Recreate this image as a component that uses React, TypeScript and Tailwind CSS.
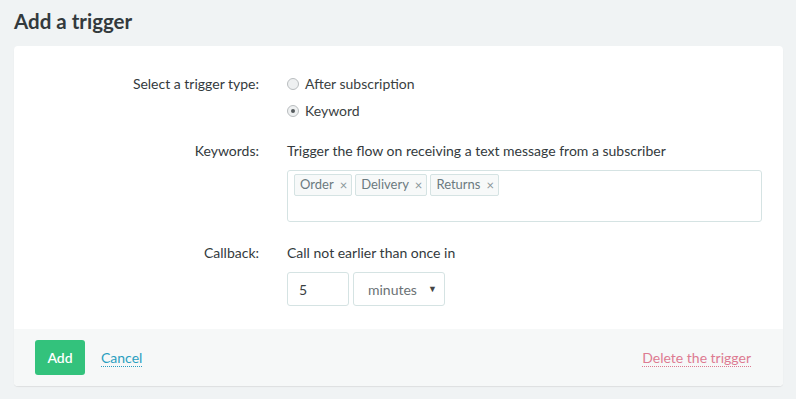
import React from "react";

function Tag({ label }: { label: string }) {
  return (
    <span className="flex h-[22px] items-center gap-[6px] rounded-[2px] border border-[#d5e3e3] bg-[#f7f9f9] pl-[5px] pr-[4px] text-[13px] text-[#6b7a80]">
      <span>{label}</span>
      <span className="text-[13px] leading-none text-[#8a9599]">×</span>
    </span>
  );
}

function Radio({ checked, label }: { checked?: boolean; label: string }) {
  return (
    <label className="flex h-[27px] items-center gap-[6px] text-[14px] text-[#3a3f42]">
      <span className="flex h-[12px] w-[12px] items-center justify-center rounded-full border border-[#b9bdbf] bg-[#eef0f1]">
        {checked && <span className="h-[4px] w-[4px] rounded-full bg-[#555b5e]" />}
      </span>
      <span>{label}</span>
    </label>
  );
}

export default function App() {
  return (
    <div
      className="h-[399px] w-[796px] bg-[#f0f3f4] px-[14px] pt-[8px]"
      style={{ fontFamily: "Lato, 'Open Sans', sans-serif" }}
    >
      <h1 className="text-[20.5px] font-bold leading-[26px] text-[#333a3d]">Add a trigger</h1>
      <div className="mt-[12px] w-[769px] overflow-hidden rounded-[4px] bg-white shadow-[0_1px_1px_rgba(0,0,0,0.08)]">
        <div className="grid grid-cols-[245px_1fr] gap-x-[28px] pb-[23px] pl-0 pr-[21px] pt-[24px] text-[14px] text-[#333a3d]">
          <div className="flex h-[27px] items-center justify-end">Select a trigger type:</div>
          <div className="flex flex-col">
            <Radio label="After subscription" />
            <Radio checked label="Keyword" />
          </div>

          <div className="mt-[16px] flex h-[20px] items-center justify-end">Keywords:</div>
          <div className="mt-[16px] flex flex-col">
            <div className="flex h-[20px] items-center">Trigger the flow on receiving a text message from a subscriber</div>
            <div className="mt-[10px] flex h-[52px] items-start gap-[3px] rounded-[3px] border border-[#d5e3e3] px-[6px] pt-[3px]">
              <Tag label="Order" />
              <Tag label="Delivery" />
              <Tag label="Returns" />
            </div>
          </div>

          <div className="mt-[20px] flex h-[20px] items-center justify-end">Callback:</div>
          <div className="mt-[20px] flex flex-col">
            <div className="flex h-[20px] items-center">Call not earlier than once in</div>
            <div className="mt-[10px] flex gap-[4px]">
              <div className="flex h-[34px] w-[62px] items-center rounded-[3px] border border-[#d5e3e3] pl-[11px] text-[14px] text-[#3a3f42]">5</div>
              <div className="flex h-[34px] w-[92px] items-center justify-between rounded-[3px] border border-[#d5e3e3] pl-[14px] pr-[7px] text-[14px] text-[#6b7275]">
                <span>minutes</span>
                <span className="text-[9px] text-[#444]">▼</span>
              </div>
            </div>
          </div>
        </div>
        <div className="flex h-[57px] items-center bg-[#f6f8f8] pl-[21px] pr-[32px]">
          <button className="flex h-[35px] w-[50px] items-center justify-center rounded-[3px] bg-[#33c27c] text-[14px] font-semibold text-white">
            Add
          </button>
          <span className="ml-[16px] border-b border-dotted border-[#2a9fc0] text-[14px] leading-[17px] text-[#2a9fc0]">Cancel</span>
          <span className="ml-auto border-b border-dotted border-[#dd7b92] text-[14px] leading-[17px] text-[#dd7b92]">Delete the trigger</span>
        </div>
      </div>
    </div>
  );
}
